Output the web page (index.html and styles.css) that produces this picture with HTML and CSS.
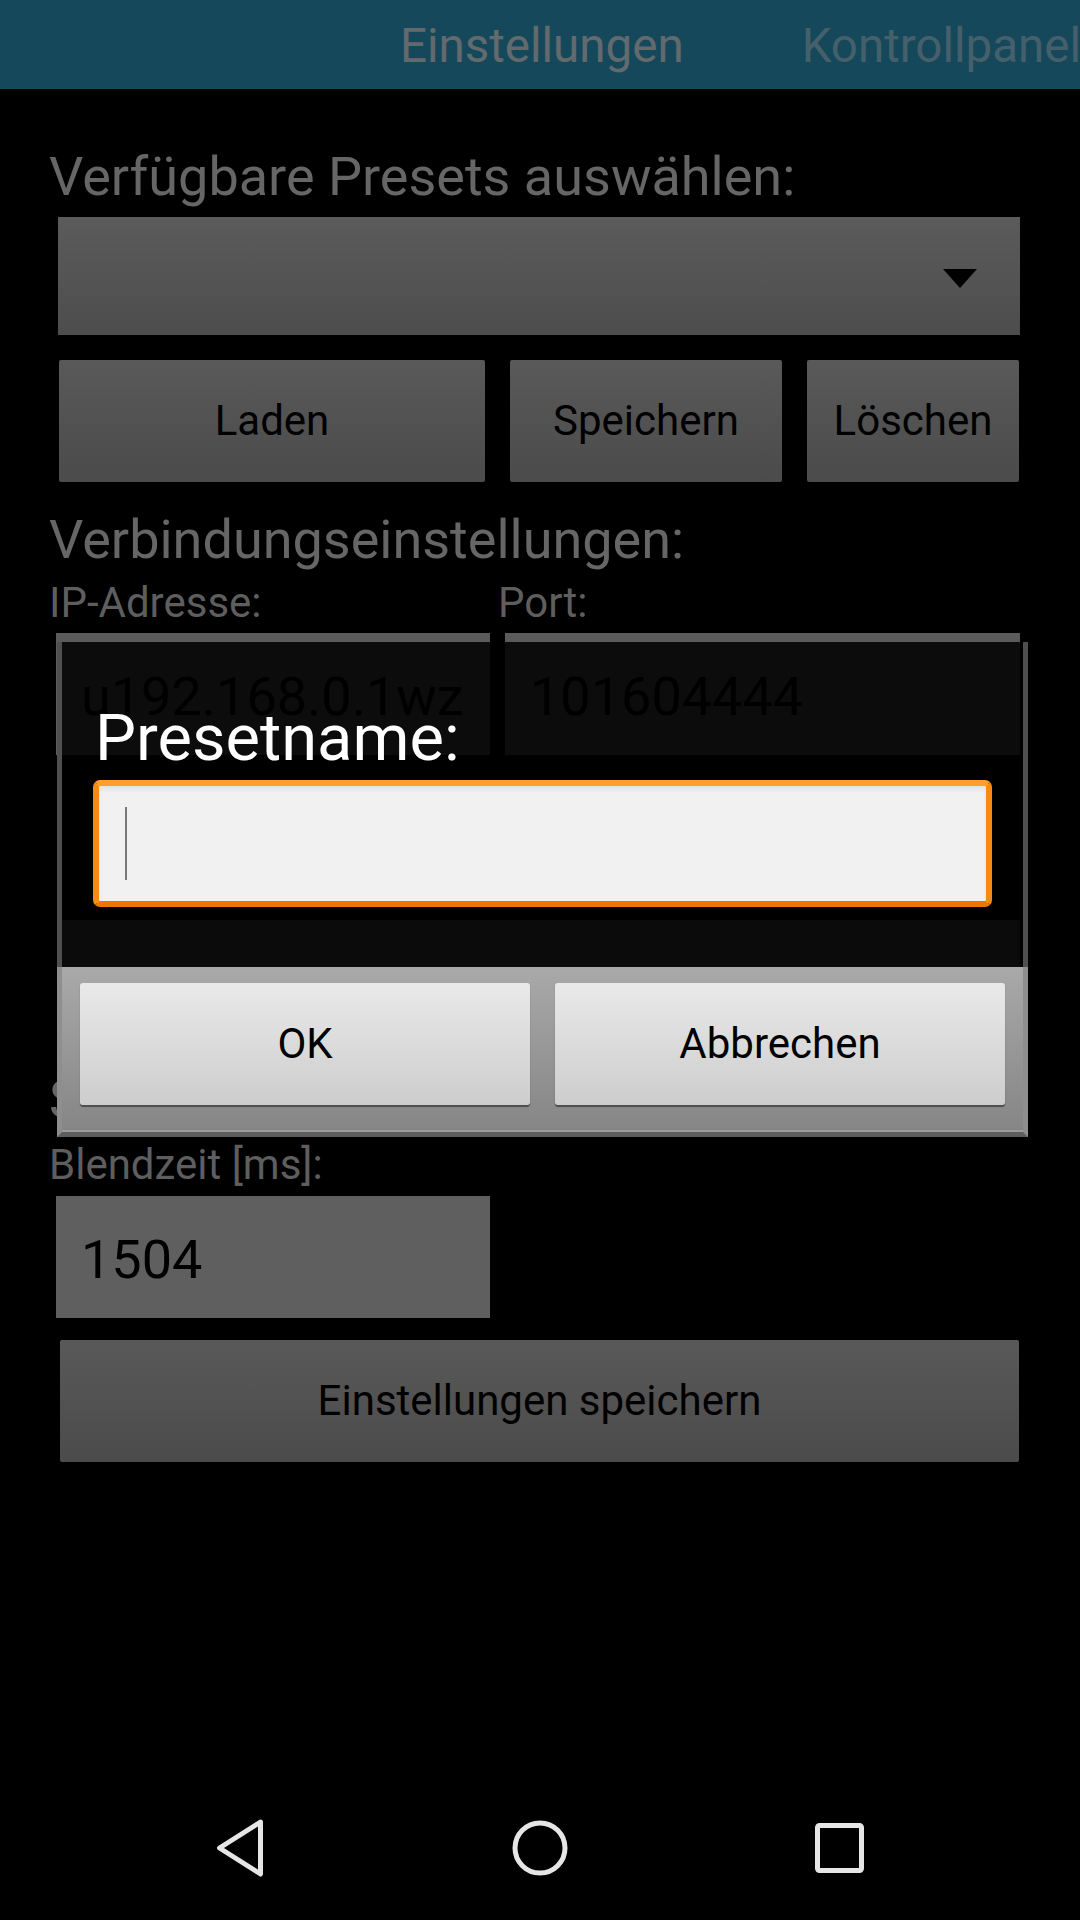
FILE: index.html
```html
<!DOCTYPE html>
<html lang="de">
<head>
<meta charset="utf-8">
<title>Einstellungen</title>
<link rel="stylesheet" href="styles.css">
</head>
<body>
<div class="screen">
  <header class="tabs">
    <span class="tab tab-current">Einstellungen</span>
    <span class="tab tab-next">Kontrollpanel</span>
  </header>

  <main class="content">
    <h2 class="heading">Verfügbare Presets auswählen:</h2>
    <div class="spinner"><span class="spinner-arrow"></span></div>
    <div class="btn-row">
      <div class="btn btn-load">Laden</div>
      <div class="btn btn-save">Speichern</div>
      <div class="btn btn-delete">Löschen</div>
    </div>

    <h2 class="heading heading-conn">Verbindungseinstellungen:</h2>
    <div class="conn-grid">
      <div class="conn-col conn-ip">
        <div class="label">IP-Adresse:</div>
        <div class="field field-ip">u192.168.0.1wz</div>
      </div>
      <div class="conn-col conn-port">
        <div class="label">Port:</div>
        <div class="field field-port">101604444</div>
      </div>
    </div>
    <div class="btn btn-hidden"></div>

    <h2 class="heading heading-other">Sonstiges:</h2>
    <div class="label label-blend">Blendzeit [ms]:</div>
    <div class="field field-blend">1504</div>
    <div class="btn btn-wide">Einstellungen speichern</div>
  </main>

  <nav class="navbar">
    <svg class="nav-icon" viewBox="0 0 60 60" width="60" height="60">
      <path d="M50.5 4 L9.5 30 L50.5 56 Z" fill="none" stroke="#e6e6e6" stroke-width="5" stroke-linejoin="round"/>
    </svg>
    <svg class="nav-icon" viewBox="0 0 60 60" width="60" height="60">
      <circle cx="30" cy="30" r="25" fill="none" stroke="#e6e6e6" stroke-width="5"/>
    </svg>
    <svg class="nav-icon" viewBox="0 0 60 60" width="60" height="60">
      <rect x="7.5" y="7.5" width="44" height="45" rx="2" fill="none" stroke="#e6e6e6" stroke-width="5"/>
    </svg>
  </nav>

  <div class="dialog">
    <div class="dialog-body">
      <div class="dialog-title">Presetname:</div>
      <div class="dialog-input"><span class="caret"></span></div>
    </div>
    <div class="dialog-buttons">
      <div class="dbtn">OK</div>
      <div class="dbtn">Abbrechen</div>
    </div>
  </div>
</div>
</body>
</html>
```

FILE: styles.css
```css
html, body {
  margin: 0;
  padding: 0;
  background: #000;
}

body {
  font-family: Roboto, "Liberation Sans", sans-serif;
}

.screen {
  position: relative;
  width: 1080px;
  height: 1920px;
  overflow: hidden;
  display: flex;
  flex-direction: column;
  background: #000;
}

/* ---------- top tab bar ---------- */
.tabs {
  height: 89px;
  flex: 0 0 89px;
  box-sizing: border-box;
  background: #16485c;
  display: flex;
  align-items: center;
  padding: 2px 0 0 400px;
  gap: 118px;
  white-space: nowrap;
  overflow: hidden;
}

.tab {
  font-size: 47.5px;
  line-height: 60px;
}

.tab-current {
  color: #626a6d;
}

.tab-next {
  color: #45606a;
}

/* ---------- content ---------- */
.content {
  flex: 1 1 auto;
  display: flex;
  flex-direction: column;
  align-items: flex-start;
  padding: 56px 0 0 49px;
}

.heading {
  margin: 0;
  font-weight: 400;
  font-size: 54px;
  line-height: 64px;
  color: #666;
  white-space: nowrap;
}

.heading-conn {
  margin-top: 26px;
}

.heading-other {
  margin-top: 26px;
}

.spinner {
  margin: 8px 0 0 9px;
  width: 962px;
  height: 118px;
  box-sizing: border-box;
  background: linear-gradient(#5b5b5b, #4d4d4d);
  box-shadow: 0 1px 1px rgba(0, 0, 0, 0.6);
  display: flex;
  align-items: center;
  justify-content: flex-end;
  padding: 4px 43px 0 0;
}

.spinner-arrow {
  width: 0;
  height: 0;
  border-left: 17px solid transparent;
  border-right: 17px solid transparent;
  border-top: 19px solid #000;
}

.btn-row {
  margin: 25px 0 0 10px;
  display: flex;
  gap: 25px;
}

.btn {
  height: 122px;
  box-sizing: border-box;
  background: linear-gradient(#595959, #4b4b4b);
  box-shadow: 0 2px 1px rgba(0, 0, 0, 0.7);
  border-radius: 2px;
  display: flex;
  align-items: center;
  justify-content: center;
  font-size: 42px;
  line-height: 50px;
  color: #000;
  white-space: nowrap;
}

.btn-load {
  width: 426px;
}

.btn-save {
  width: 272px;
}

.btn-delete {
  width: 212px;
}

.conn-grid {
  margin-top: 6px;
  display: grid;
  grid-template-columns: 449px 522px;
}

.conn-col {
  display: flex;
  flex-direction: column;
  align-items: flex-start;
}

.label {
  font-size: 42px;
  line-height: 50px;
  color: #5e5e5e;
  white-space: nowrap;
}

.field {
  margin: 5px 0 0 7px;
  height: 122px;
  box-sizing: border-box;
  background: #5b5b5b;
  display: flex;
  align-items: center;
  padding: 6px 0 0 25px;
  font-size: 54px;
  line-height: 64px;
  color: #000;
  white-space: nowrap;
}

.field-ip {
  width: 434px;
}

.field-port {
  width: 515px;
}

.btn-hidden {
  margin: 165px 0 0 11px;
  width: 960px;
}

.label-blend {
  margin-top: 8px;
}

.field-blend {
  margin-top: 6px;
  width: 434px;
  background: #5f5f5f;
}

.btn-wide {
  margin: 22px 0 0 11px;
  width: 959px;
}

/* ---------- navigation bar ---------- */
.navbar {
  flex: 0 0 144px;
  height: 144px;
  display: flex;
  align-items: center;
  justify-content: center;
  gap: 240px;
  background: #000;
}

.nav-icon {
  display: block;
}

/* ---------- dialog overlay ---------- */
.dialog {
  position: absolute;
  left: 57px;
  top: 642px;
  width: 971px;
  display: flex;
  flex-direction: column;
}

.dialog-body {
  height: 325px;
  box-sizing: border-box;
  background: rgba(0, 0, 0, 0.87);
  border-left: 5px solid #4f4f4f;
  border-right: 5px solid #4f4f4f;
  padding: 58px 0 0 31px;
}

.dialog-title {
  font-size: 65px;
  line-height: 76px;
  color: #fff;
  padding-left: 2px;
  white-space: nowrap;
}

.dialog-input {
  margin-top: 4px;
  width: 899px;
  height: 127px;
  box-sizing: border-box;
  border: 6px solid;
  border-color: #fd9f2a #f58a14 #ee7600 #f58a14;
  border-radius: 7px;
  background: #f1f1f1;
  box-shadow: inset 0 4px 4px rgba(0, 0, 0, 0.05);
  display: flex;
  align-items: center;
  padding-left: 26px;
}

.caret {
  width: 2px;
  height: 73px;
  background: #7a7a7a;
}

.dialog-buttons {
  height: 170px;
  box-sizing: border-box;
  background: linear-gradient(#a9a9a9, #858585);
  border-left: 5px solid #8e8e8e;
  border-right: 5px solid #8e8e8e;
  border-bottom: 5px solid #5e5e5e;
  box-shadow: inset 0 -2px 0 #9c9c9c;
  display: flex;
  gap: 25px;
  padding: 16px 0 0 18px;
}

.dbtn {
  width: 450px;
  height: 122px;
  box-sizing: border-box;
  background: linear-gradient(#e9e9e9, #cdcdcd);
  border-radius: 3px;
  box-shadow: 0 2px 1px rgba(0, 0, 0, 0.45);
  display: flex;
  align-items: center;
  justify-content: center;
  font-size: 42px;
  line-height: 50px;
  color: #000;
}
```
